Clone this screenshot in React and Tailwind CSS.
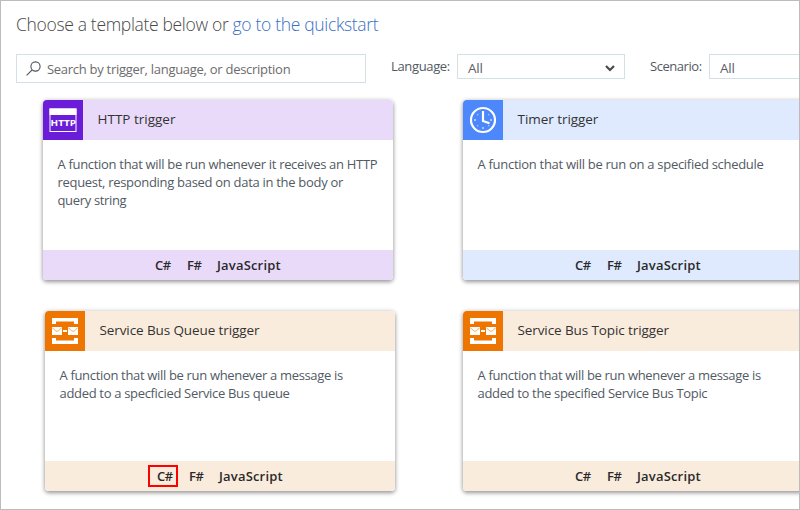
import React from "react";

function HttpIcon() {
  return (
    <svg width="40" height="40" viewBox="0 0 40 40" className="block shrink-0">
      <rect width="40" height="40" fill="#6b1cd8" />
      <rect x="7" y="9" width="26" height="22.5" fill="none" stroke="#fff" />
      <rect x="6.5" y="8.5" width="27" height="6.5" fill="#fff" />
      <text x="7.6" y="26" textLength="25.4" lengthAdjust="spacingAndGlyphs" fill="#fff" fontFamily="Open Sans, sans-serif" fontWeight="700" fontSize="9.6">HTTP</text>
    </svg>
  );
}

function TimerIcon() {
  return (
    <svg width="40" height="40" viewBox="0 0 40 40" className="block shrink-0">
      <rect width="40" height="40" fill="#4c87fb" />
      <circle cx="20" cy="20" r="12" fill="none" stroke="#fff" strokeWidth="2.2" />
      <path d="M20 11v10l6.5 2.2" fill="none" stroke="#fff" strokeWidth="2.2" />
      <g fill="#a9c6ff">
        <rect x="11" y="19" width="2" height="2" />
        <rect x="27" y="19" width="2" height="2" />
        <rect x="19" y="27" width="2" height="2" />
        <rect x="14" y="14" width="1.3" height="1.3" />
        <rect x="25" y="14" width="1.3" height="1.3" />
        <rect x="14" y="25" width="1.3" height="1.3" />
        <rect x="25" y="25" width="1.3" height="1.3" />
      </g>
    </svg>
  );
}

function BusIcon() {
  return (
    <svg width="40" height="40" viewBox="0 0 40 40" className="block shrink-0">
      <rect width="40" height="40" fill="#ee7600" />
      <path d="M7 13V7h26v6h-4v-2.5H11V13zM7 27v6h26v-6h-4v2.5H11V27z" fill="#fff" />
      <path d="M7 16h10v8H7zM23 16h10v8H23zM18 19h4v2h-4z" fill="#fff" />
      <path d="M7.3 16.6l3.2 3.2q1.5 1 3 0l3.2-3.2M23.3 16.6l3.2 3.2q1.5 1 3 0l3.2-3.2" fill="none" stroke="#f3a04e" strokeWidth="0.9" />
    </svg>
  );
}

function Select({ width, arrow }) {
  return (
    <div className={`${width} flex h-[25px] shrink-0 items-center justify-between border border-[#d5dfe6] bg-white pt-[3px] pr-[9px] pl-[10px] text-[13.5px] text-[#5c6066]`}>
      <span className="tracking-[-0.2px]">All</span>
      {arrow && (
        <svg width="10" height="7" viewBox="0 0 10 7" className="block">
          <path d="M1 1l4 4 4-4" fill="none" stroke="#4a4a4a" strokeWidth="2.2" />
        </svg>
      )}
    </div>
  );
}

function Card({ icon, title, titleClass, lines, tint, marked }) {
  return (
    <div className="h-[180px] w-[350px] shrink-0 rounded-[4px] shadow-[0_2px_4px_rgba(0,0,0,0.36),0_0_5px_rgba(0,0,0,0.14)]">
      <div className="flex h-full flex-col overflow-hidden rounded-[4px] bg-white">
        <div className={`flex h-10 shrink-0 items-center ${tint}`}>
          {icon}
          <h2 className={`ml-[14.5px] pb-[2px] text-[13.5px] whitespace-nowrap text-[#333] ${titleClass}`}>{title}</h2>
        </div>
        <div className="h-[110px] shrink-0 pt-[15px] pl-[14.5px] text-[13px] leading-[18px] text-[#525a64]">
          {lines.map(([text, spacing]) => (
            <div key={text} className={`whitespace-nowrap ${spacing}`}>{text}</div>
          ))}
        </div>
        <div className={`flex h-[30px] shrink-0 items-center pl-[103px] text-[13px] font-semibold text-[#2a2a2a] ${tint}`}>
          <span className={`flex h-[22px] w-[30px] items-center border-2 pt-[2px] pl-[7px] tracking-[-0.5px] ${marked ? "border-[#f00]" : "border-transparent"}`}>C#</span>
          <span className="ml-[11px] w-[30px] pt-[2px] tracking-[-0.4px]">F#</span>
          <span className="pt-[2px] tracking-[0.18px]">JavaScript</span>
        </div>
      </div>
    </div>
  );
}

export default function App() {
  return (
    <div className="h-[510px] w-[800px] overflow-hidden border border-[#bcbcbc] bg-white font-['Open_Sans','Noto_Sans',sans-serif]">
      <h1 className="mt-[9px] ml-[15px] h-[28px] text-[17.5px] leading-[28px] font-light tracking-[-0.33px] whitespace-nowrap text-[#484848]">
        Choose a template below or <a className="text-[#3a6fc4]">go to the quickstart</a>
      </h1>
      <div className="mt-[16px] ml-[15px] flex h-[29px] items-start text-[13px] text-[#525a64]">
        <div className="flex h-[29px] w-[350px] shrink-0 items-center border border-[#d5dfe6] pl-[9px]">
          <svg width="15" height="15" viewBox="0 0 15 15" className="block">
            <circle cx="9.5" cy="5.5" r="4.6" fill="none" stroke="#4f5358" strokeWidth="1.1" />
            <path d="M6.2 8.8L.6 14.4" stroke="#4f5358" strokeWidth="1.1" />
          </svg>
          <span className="ml-[6px] pt-[2px] text-[13px] tracking-[-0.28px] text-[#6c6c6c]">Search by trigger, language, or description</span>
        </div>
        <span className="ml-[25px] w-[66px] shrink-0 text-[13px] leading-[25px] tracking-[-0.35px]">Language:</span>
        <Select width="w-[168px]" arrow />
        <span className="ml-[25px] w-[59px] shrink-0 text-[13px] leading-[25px] tracking-[-0.45px]">Scenario:</span>
        <Select width="w-[168px]" arrow />
      </div>
      <div className="mt-[17px] ml-[42px] flex gap-[70px]">
        <Card
          icon={<HttpIcon />}
          title="HTTP trigger"
          titleClass="tracking-[0px]"
          tint="bg-[#e9dafa]"
          lines={[
            ["A function that will be run whenever it receives an HTTP", "tracking-[-0.31px]"],
            ["request, responding based on data in the body or", "tracking-[-0.3px]"],
            ["query string", "tracking-[-0.34px]"],
          ]}
        />
        <Card
          icon={<TimerIcon />}
          title="Timer trigger"
          titleClass="tracking-[-0.05px]"
          tint="bg-[#dfeaff]"
          lines={[["A function that will be run on a specified schedule", "tracking-[-0.29px]"]]}
        />
      </div>
      <div className="mt-[31px] ml-[44px] flex gap-[68px]">
        <Card
          icon={<BusIcon />}
          title="Service Bus Queue trigger"
          titleClass="tracking-[-0.1px]"
          tint="bg-[#faecdd]"
          marked
          lines={[
            ["A function that will be run whenever a message is", "tracking-[-0.33px]"],
            ["added to a specficied Service Bus queue", "tracking-[-0.32px]"],
          ]}
        />
        <Card
          icon={<BusIcon />}
          title="Service Bus Topic trigger"
          titleClass="tracking-[-0.1px]"
          tint="bg-[#faecdd]"
          lines={[
            ["A function that will be run whenever a message is", "tracking-[-0.33px]"],
            ["added to the specified Service Bus Topic", "tracking-[-0.33px]"],
          ]}
        />
      </div>
    </div>
  );
}
